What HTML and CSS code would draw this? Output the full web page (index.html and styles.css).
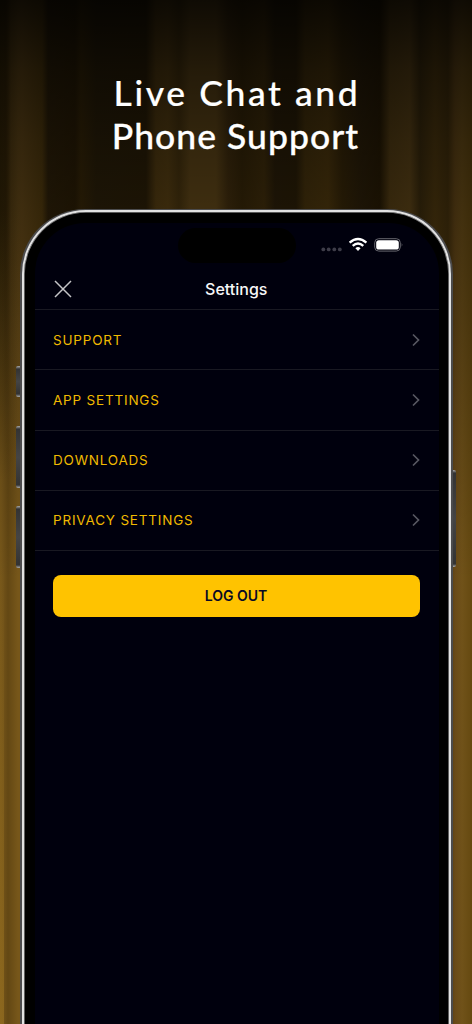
FILE: index.html
```html
<!DOCTYPE html>
<html lang="en">
<head>
<meta charset="utf-8">
<title>Settings</title>
<link rel="stylesheet" href="styles.css">
</head>
<body>
<main class="promo">
  <h1 class="headline"><span class="line-one">Live Chat and</span><span class="line-two">Phone Support</span></h1>
  <div class="phone">
    <i class="key action"></i><i class="key volume-up"></i><i class="key volume-down"></i><i class="key power"></i>
    <div class="bezel">
      <div class="screen">
        <div class="island"></div>
        <div class="status">
          <svg width="84" height="18" viewBox="0 0 84 18">
            <g fill="#3e3d49"><circle cx="3.3" cy="13.4" r="1.9"/><circle cx="8.7" cy="13.4" r="1.9"/><circle cx="14.3" cy="13.4" r="1.9"/><circle cx="19.8" cy="13.4" r="1.9"/></g>
            <g fill="none" stroke="#fff" stroke-width="2.400"><path d="M29.600 6.700Q38 -.6 46.400 6.700"/><path d="M32.700 9.900Q38 5.200 43.300 9.900"/></g>
            <path fill="#fff" d="M35.400 12.200Q38 10 40.600 12.200L38 14.900Z"/>
            <rect x="54.700" y="2.700" width="25.600" height="12.400" rx="4" fill="none" stroke="#65656d"/>
            <rect x="56.200" y="4.200" width="22.600" height="9.400" rx="2.600" fill="#fff"/>
            <path d="M81.700 7q1.500 1.800 0 3.800z" fill="#65656d"/>
          </svg>
        </div>
        <header class="bar">
          <svg class="close" width="18" height="18" viewBox="0 0 18 18"><path d="M1 1L17 17M17 1L1 17" fill="none" stroke="#c5c5c7" stroke-width="1.500"/></svg>
          <h2>Settings</h2>
        </header>
        <ul class="menu">
          <li><span>SUPPORT</span><svg width="8" height="14" viewBox="0 0 8 14"><path d="M1 1.500L6.500 7L1 12.500"/></svg></li>
          <li><span>APP SETTINGS</span><svg width="8" height="14" viewBox="0 0 8 14"><path d="M1 1.500L6.500 7L1 12.500"/></svg></li>
          <li><span>DOWNLOADS</span><svg width="8" height="14" viewBox="0 0 8 14"><path d="M1 1.500L6.500 7L1 12.500"/></svg></li>
          <li><span>PRIVACY SETTINGS</span><svg width="8" height="14" viewBox="0 0 8 14"><path d="M1 1.500L6.500 7L1 12.500"/></svg></li>
        </ul>
        <button class="logout">LOG OUT</button>
      </div>
    </div>
  </div>
</main>
</body>
</html>
```
FILE: styles.css
```css
* { box-sizing: border-box; }
body { margin: 0; background: #000; font-family: Inter, "Liberation Sans", sans-serif; }
.promo {
  width: 472px; height: 1024px; overflow: hidden; padding-top: 71px;
  background:
    linear-gradient(180deg, rgba(0,0,0,.86) 0, rgba(0,0,0,.66) 70px, rgba(0,0,0,.52) 140px, rgba(0,0,0,.42) 210px, rgba(0,0,0,.22) 380px, transparent 580px),
    linear-gradient(180deg, transparent 560px, rgba(146,108,31,.75) 1000px) 0 0 / 4px 100% no-repeat,
    linear-gradient(90deg, rgba(40,25,0,0) 1px, rgba(40,25,0,.25) 8px, rgba(40,25,0,0) 18px) 0 0 / 20px 100% no-repeat,
    linear-gradient(180deg, transparent 210px, #77571a 480px) 0 0 / 20px 100% no-repeat,
    linear-gradient(90deg, #362707 0, #3d2b09 6px, #654a18 11px, #6b4d1a 22px, #59400f 42px, #33240a 48px, #2f2006 75px, #3d2b09 81px, #30230a 96px, #302208 146px, #5d4313 156px, #624715 168px, #503a10 179px, #6a4e1b 190px, #6a4e1b 216px, #4a3410 228px, #3d2b09 242px, #49340d 264px, #30220a 275px, #302208 296px, #4f390e 305px, #573e0f 328px, #3d2b09 342px, #30220a 362px, #2c1e05 380px, #5d4416 390px, #654a1a 410px, #402f0e 420px, #553d10 435px, #49340d 448px, #694a18 455px, #705219 462px, #654910 472px);
}
.headline { display: flex; flex-direction: column; align-items: center; height: 137.500px; margin: 0; color: #fff; font: 500 35.500px/43px Lato, sans-serif; white-space: pre; }
.line-one { letter-spacing: 2.600px; margin-right: -2px; -webkit-text-stroke: .2px #fff; }
.line-two { letter-spacing: 1.050px; -webkit-text-stroke: .3px #fff; margin-right: 1px; }
.phone {
  position: relative; width: 433px; height: 900px; margin-left: 20px; padding: 1.500px 2px 0 1.500px;
  border-radius: 65px 65px 0 0; background: #4b4b4d;
}
.bezel { height: 100%; padding: 11px 10.500px 0 11px; background: #000; border: 2px solid #e2e2e2; border-bottom: 0; border-radius: 64px 64px 0 0; box-shadow: inset 0 0 0 .8px #777; }
.screen { position: relative; height: 100%; overflow: hidden; padding-top: 13px; background: #00000d; border-radius: 50px 50px 0 0; }
.island { position: absolute; left: 143px; top: 5px; width: 118px; height: 35px; border-radius: 18px; background: #000; }
.status { display: flex; justify-content: flex-end; height: 41px; padding-right: 35px; }
.bar { display: flex; align-items: center; height: 32px; padding: 0 19.500px 9px; }
.bar h2 { flex: 1; margin: 0 38px 0 19.500px; text-align: center; color: #f7f7f8; font-size: 16px; font-weight: 500; line-height: 20px; }
.menu { list-style: none; margin: 0; padding: 0; border-top: 1px solid #191922; }
.menu li { display: flex; align-items: center; justify-content: space-between; height: 60.250px; padding: 0 19px 0 18.500px; border-bottom: 1px solid #191922; }
.menu span { color: #f0ba00; font-size: 13.500px; line-height: 18px; letter-spacing: .8px; }
.menu path { fill: none; stroke: #575762; stroke-width: 1.700; }
.logout { display: block; width: 367px; height: 42px; margin: 24px 0 0 18px; padding: 0; border: 0; border-radius: 8px; background: #ffc300; color: #080a25; font: 600 14px/20px Inter, sans-serif; }
.key { position: absolute; left: -4px; width: 4px; background: linear-gradient(#aaa 0, #333 3px, #444 50%, #333 calc(100% - 3px), #aaa); border-radius: 2px 0 0 2px; }
.action { top: 157px; height: 31px; }
.volume-up { top: 217px; height: 62px; }
.volume-down { top: 297px; height: 62px; }
.power { left: 433px; width: 3px; top: 261px; height: 97px; border-radius: 0 2px 2px 0; }
```
